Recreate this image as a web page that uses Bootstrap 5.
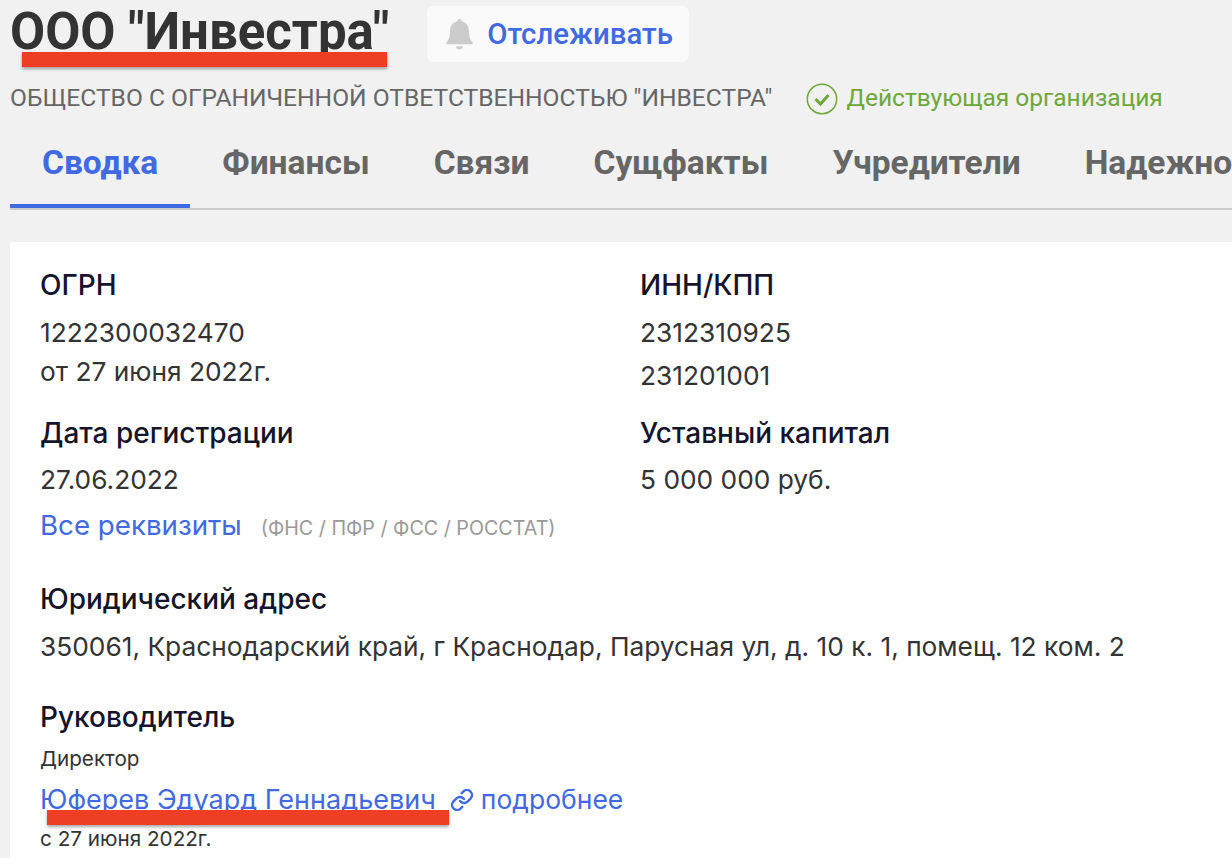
<!DOCTYPE html>
<html lang="en">
<head>
    <meta charset="UTF-8">
    <meta name="viewport" content="width=device-width, initial-scale=1.0">
    <title>Инвестра</title>
    <link href="https://cdn.jsdelivr.net/npm/bootstrap@5.3.0/dist/css/bootstrap.min.css" rel="stylesheet">
    <style>
        body {
            background: #f1f1f1;
            font-family: Roboto, "Liberation Sans", sans-serif;
            color: #333;
            overflow: hidden;
            height: 858px;
            width: 1232px;
        }

        .page-wrap {
            padding-left: 10px;
        }

        .top-line {
            height: 70px;
            padding-top: 6px;
            gap: 38px;
        }

        .org-title {
            position: relative;
            font-size: 51px;
            font-weight: 700;
            line-height: 52px;
            margin: 0;
            color: #333;
            white-space: nowrap;
        }

        .red-mark {
            position: absolute;
            height: 15px;
            background: #ee3f24;
            box-shadow: 0 2px 3px rgba(0, 0, 0, .35);
        }

        .title-mark {
            left: 12px;
            top: 46px;
            width: 365px;
        }

        .follow-btn {
            height: 56px;
            width: 262px;
            background: #fafafa;
            border-radius: 7px;
            gap: 13px;
            padding-left: 18px;
            color: #4169e1;
            font-size: 29.4px;
            font-weight: 500;
            white-space: nowrap;
        }

        .sub-line {
            height: 57px;
            gap: 33px;
        }

        .full-name {
            font-size: 24.6px;
            color: #666;
            white-space: nowrap;
        }

        .org-status {
            color: #6ea73a;
            font-size: 24.5px;
            gap: 9px;
            white-space: nowrap;
        }

        .tab-bar {
            height: 83px;
            border-bottom: 2px solid #ccc;
            white-space: nowrap;
            overflow: hidden;
        }

        .tab-item {
            font-size: 33.5px;
            font-weight: 700;
            color: #666;
            padding: 0 32px;
            height: 81px;
            line-height: 72px;
            text-decoration: none;
        }

        .tab-item.is-active {
            color: #4169e1;
            border-bottom: 4px solid #4169e1;
        }

        .info-sheet {
            background: #fff;
            margin-top: 32px;
            height: 640px;
            padding: 26px 30px;
            font-family: Inter, Roboto, sans-serif;
        }

        .info-head {
            font-size: 28px;
            font-weight: 500;
            color: #14142b;
            line-height: 34px;
        }

        .info-val {
            font-size: 26.3px;
            line-height: 38px;
            color: #333;
        }

        .col-left {
            width: 600px;
            flex: none;
        }

        .val-left {
            line-height: 39px;
            margin-top: 11px;
        }

        .val-right {
            line-height: 43px;
            margin-top: 9px;
        }

        .row-two {
            margin-top: 19px;
        }

        .val-date {
            margin-top: 11px;
        }

        .req-line {
            line-height: 38px;
            margin-top: 7px;
        }

        .info-link {
            color: #4169e1;
            font-size: 27.7px;
            text-decoration: none;
        }

        .gov-note {
            font-size: 19.7px;
            color: #999;
            margin-left: 19px;
        }

        .addr-head {
            margin-top: 34px;
        }

        .addr-val {
            margin-top: 12px;
            white-space: nowrap;
        }

        .boss-head {
            margin-top: 34px;
        }

        .small-note {
            font-size: 20.7px;
            line-height: 28px;
            color: #333;
        }

        .boss-role {
            margin-top: 11px;
        }

        .boss-line {
            height: 38px;
            margin-top: 8px;
        }

        .boss-name {
            position: relative;
            font-size: 27px;
            line-height: 38px;
            margin-right: 15px;
            white-space: nowrap;
        }

        .boss-mark {
            left: 7px;
            top: 29px;
            width: 402px;
        }

        .link-icon {
            margin-right: 8px;
        }

        .more-link {
            font-size: 26.5px;
        }

        .boss-since {
            margin-top: 6px;
        }
    </style>
</head>
<body>
    <div class="page-wrap">
        <div class="top-line d-flex align-items-start">
            <h1 class="org-title">ООО "Инвестра"<span class="red-mark title-mark"></span></h1>
            <div class="follow-btn d-flex align-items-center">
                <svg width="29" height="32" viewBox="0 0 30 34"><path d="M15 1c-1.500 0-2.500 1-2.500 2.500C7 5 5 9 5 14c0 6-1.500 9-4 12v2h28v-2c-2.500-3-4-6-4-12 0-5-2-9-7.500-10.500C17.500 2 16.500 1 15 1zM11.500 30a3.500 3.500 0 0 0 7 0z" fill="#ccc"/></svg>
                <span>Отслеживать</span>
            </div>
        </div>
        <div class="sub-line d-flex align-items-center">
            <div class="full-name">ОБЩЕСТВО С ОГРАНИЧЕННОЙ ОТВЕТСТВЕННОСТЬЮ "ИНВЕСТРА"</div>
            <div class="org-status d-flex align-items-center">
                <svg width="32" height="32" viewBox="0 0 32 32"><circle cx="16" cy="16" r="14.700" fill="none" stroke="#6ea73a" stroke-width="1.500"/><path d="M9.500 16l5 5 8-9" fill="none" stroke="#6ea73a" stroke-width="3"/></svg>
                <span>Действующая организация</span>
            </div>
        </div>
        <div class="tab-bar d-flex">
            <a class="tab-item is-active" href="#">Сводка</a>
            <a class="tab-item" href="#">Финансы</a>
            <a class="tab-item" href="#">Связи</a>
            <a class="tab-item" href="#">Сущфакты</a>
            <a class="tab-item" href="#">Учредители</a>
            <a class="tab-item" href="#">Надежность</a>
        </div>
        <div class="info-sheet">
            <div class="d-flex">
                <div class="col-left">
                    <div class="info-head">ОГРН</div>
                    <div class="info-val val-left">1222300032470<br>от 27 июня 2022г.</div>
                </div>
                <div>
                    <div class="info-head">ИНН/КПП</div>
                    <div class="info-val val-right">2312310925<br>231201001</div>
                </div>
            </div>
            <div class="d-flex row-two">
                <div class="col-left">
                    <div class="info-head">Дата регистрации</div>
                    <div class="info-val val-date">27.06.2022</div>
                    <div class="req-line"><a class="info-link" href="#">Все реквизиты</a><span class="gov-note">(ФНС / ПФР / ФСС / РОССТАТ)</span></div>
                </div>
                <div>
                    <div class="info-head">Уставный капитал</div>
                    <div class="info-val val-date">5 000 000 руб.</div>
                </div>
            </div>
            <div class="info-head addr-head">Юридический адрес</div>
            <div class="info-val addr-val">350061, Краснодарский край, г Краснодар, Парусная ул, д. 10 к. 1, помещ. 12 ком. 2</div>
            <div class="info-head boss-head">Руководитель</div>
            <div class="small-note boss-role">Директор</div>
            <div class="boss-line d-flex align-items-center">
                <a class="info-link boss-name" href="#">Юферев Эдуард Геннадьевич<span class="red-mark boss-mark"></span></a>
                <svg class="link-icon" width="22" height="22" viewBox="1 1 22 22" fill="none" stroke="#4169e1" stroke-width="2.400" stroke-linecap="round"><path d="M10 13a5 5 0 0 0 7.540.540l3-3a5 5 0 0 0-7.070-7.070l-1.720 1.710"/><path d="M14 11a5 5 0 0 0-7.540-.540l-3 3a5 5 0 0 0 7.070 7.070l1.710-1.710"/></svg>
                <a class="info-link more-link" href="#">подробнее</a>
            </div>
            <div class="small-note boss-since">с 27 июня 2022г.</div>
        </div>
    </div>
    <script src="https://cdn.jsdelivr.net/npm/bootstrap@5.3.0/dist/js/bootstrap.bundle.min.js"></script>
</body>
</html>
